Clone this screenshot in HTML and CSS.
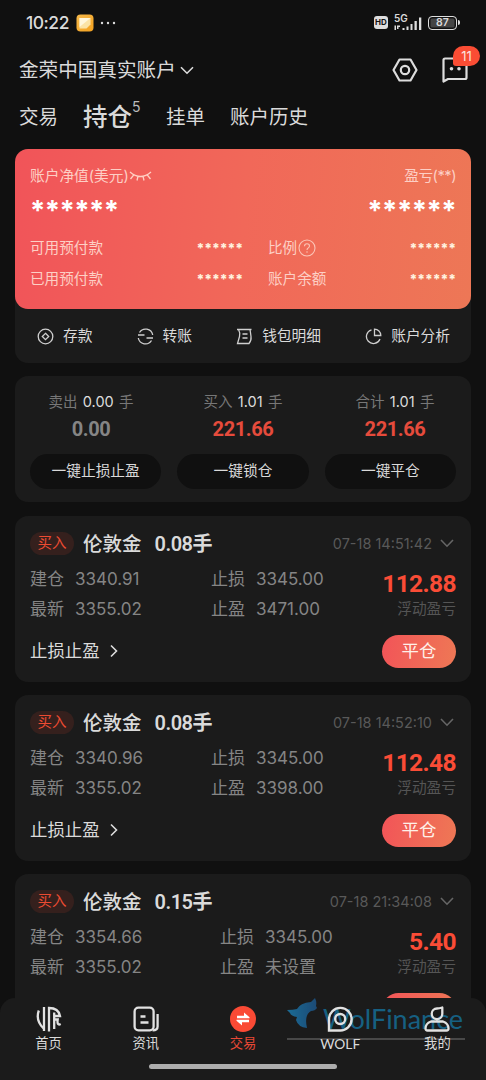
FILE: index.html
```html
<!DOCTYPE html>
<html lang="zh-CN">
<head>
<meta charset="utf-8">
<title>持仓</title>
<link rel="stylesheet" href="styles.css">
</head>
<body>
<div class="app">
  <header class="status">
    <span class="clock">10:22</span>
    <svg class="note" width="18" height="18" viewBox="0 0 18 18"><defs><linearGradient id="ng" x1="0" y1="0" x2="1" y2="1"><stop offset="0" stop-color="#f5b84a"/><stop offset="1" stop-color="#f3a11f"/></linearGradient></defs><rect x=".5" y=".5" width="17" height="17" rx="4" fill="url(#ng)"/><path d="M3.500 4h11v6.500l-4 4h-7z" fill="#fbe3a6"/><path d="M3.500 4h11L3.500 13z" fill="#fff6dc"/></svg>
    <svg width="16" height="4" viewBox="0 0 16 4" fill="#ddd"><circle cx="2" cy="2" r="1.200"/><circle cx="8" cy="2" r="1.200"/><circle cx="14" cy="2" r="1.200"/></svg>
    <span class="spacer"></span>
    <span class="hd">HD</span>
    <span class="signal"><span class="net">5G</span>
      <svg width="28" height="14" viewBox="0 0 28 14" fill="#ddd"><path d="M.5 9.500H2V14H.5zM3 9.500h3V11H4.500v2H3zM8.500 12h2v2h-2zM12.500 10.500h2V14h-2zM16.500 8h2v6h-2zM20.500 5h2.300v9h-2.300zM25 1.500h2.300V14H25z"/></svg>
    </span>
    <span class="battery">87</span><span class="cap"></span>
  </header>

  <div class="account">
    <span class="account-name">金荣中国真实账户</span>
    <svg width="14" height="9" viewBox="0 0 14 9" fill="none" stroke="#ddd" stroke-width="1.600"><path d="M1 1.200l6 6 6-6"/></svg>
    <span class="spacer"></span>
    <svg class="gear" width="26" height="24" viewBox="0 0 26 24" fill="none" stroke="#ddd" stroke-width="2.200" stroke-linejoin="round"><path d="M7.500 1.500h11L24.500 12l-6 10.500h-11L1.500 12z"/><circle cx="13" cy="12" r="4.200"/></svg>
    <span class="msg">
      <svg width="26" height="26" viewBox="0 0 26 26" fill="none" stroke="#ddd" stroke-width="2.200" stroke-linejoin="round"><path d="M1.500 24.500V3q0-1.500 1.500-1.500h20q1.500 0 1.500 1.500v17.500q0 1.500-1.500 1.500H6z"/><g fill="#ddd" stroke="none"><circle cx="9.500" cy="11.800" r="1.800"/><circle cx="17" cy="11.800" r="1.800"/></g></svg>
      <span class="badge">11</span>
    </span>
  </div>

  <nav class="tabs">
    <span>交易</span>
    <span class="tab-on">持仓<sup>5</sup></span>
    <span>挂单</span>
    <span>账户历史</span>
  </nav>

  <main class="content">
    <section class="wallet">
      <div class="balance">
        <div class="b-head">
          <span class="row">账户净值(美元)<svg width="23" height="11" viewBox="0 0 23 11" fill="none" stroke="#ffd0c4" stroke-width="1.300"><path d="M1 1q10.500 9 21 0M5 3.600L1.500 8M9 5.200L8 9.500M14 5.200l1 4.300M18 3.600L21.500 8"/></svg></span>
          <span>盈亏(**)</span>
        </div>
        <div class="b-stars"><span>******</span><span>******</span></div>
        <div class="b-grid">
          <span>可用预付款</span><span class="mask">******</span>
          <span class="row second">比例<svg width="18" height="18" viewBox="0 0 18 18" fill="none" stroke="#fbc4b6" stroke-width="1.100"><circle cx="9" cy="9" r="8"/><path d="M6.500 7.200q0-2.500 2.500-2.500t2.500 2.200q0 1.200-1.300 2Q9 9.600 9 11M9 12.300v1.400"/></svg></span><span class="mask">******</span>
          <span>已用预付款</span><span class="mask">******</span>
          <span class="second">账户余额</span><span class="mask">******</span>
        </div>
      </div>
      <div class="actions">
        <span class="action"><svg width="17" height="17" viewBox="0 0 17 17"><circle cx="8.500" cy="8.500" r="7.300"/><path d="M8.500 5.300l3.200 3.200-3.200 3.200-3.200-3.200z"/></svg>存款</span>
        <span class="action"><svg width="17" height="17" viewBox="0 0 17 17"><path d="M2.500 4.500A7.200 7.200 0 0 1 15.700 7M1 7h6.500M14.500 12.500A7.200 7.200 0 0 1 1.300 10M16 10H9.500"/></svg>转账</span>
        <span class="action"><svg width="17" height="17" viewBox="0 0 17 17"><path d="M1 1.500h14.500M2.500 1.500q2 3.500 1 7T1.500 15.500h11.500q2.500-3 2-7t-1-7M6.500 6h5M6.500 10h5"/></svg>钱包明细</span>
        <span class="action"><svg width="17" height="17" viewBox="0 0 17 17"><path d="M6.500 1.800A7 7 0 1 0 15 11M9.500 1.200v6.300h6.300A6.300 6.300 0 0 0 9.500 1.200z"/></svg>账户分析</span>
      </div>
    </section>

    <section class="summary">
      <div class="sums">
        <div>卖出 <b>0.00</b> 手<strong class="zero">0.00</strong></div>
        <div>买入 <b>1.01</b> 手<strong>221.66</strong></div>
        <div>合计 <b>1.01</b> 手<strong>221.66</strong></div>
      </div>
      <div class="pills"><span>一键止损止盈</span><span>一键锁仓</span><span>一键平仓</span></div>
    </section>

    <article class="position">
      <div class="p-head"><span class="tag">买入</span><span class="name">伦敦金</span><span class="lots">0.08手</span><span class="spacer"></span><time>07-18 14:51:42</time><svg width="14" height="9" viewBox="0 0 14 9"><path d="M1 1l6 6.200L13 1"/></svg></div>
      <div class="p-body">
        <div class="quotes"><span>建仓<i>3340.91</i></span><span>最新<i>3355.02</i></span></div>
        <div class="quotes"><span>止损<i>3345.00</i></span><span>止盈<i>3471.00</i></span></div>
        <div class="profit"><strong>112.88</strong><span>浮动盈亏</span></div>
      </div>
      <div class="p-foot"><span class="row">止损止盈<svg width="8" height="14" viewBox="0 0 8 14"><path d="M1 1.500L6.500 7 1 12.500"/></svg></span><span class="close">平仓</span></div>
    </article>

    <article class="position">
      <div class="p-head"><span class="tag">买入</span><span class="name">伦敦金</span><span class="lots">0.08手</span><span class="spacer"></span><time>07-18 14:52:10</time><svg width="14" height="9" viewBox="0 0 14 9"><path d="M1 1l6 6.200L13 1"/></svg></div>
      <div class="p-body">
        <div class="quotes"><span>建仓<i>3340.96</i></span><span>最新<i>3355.02</i></span></div>
        <div class="quotes"><span>止损<i>3345.00</i></span><span>止盈<i>3398.00</i></span></div>
        <div class="profit"><strong>112.48</strong><span>浮动盈亏</span></div>
      </div>
      <div class="p-foot"><span class="row">止损止盈<svg width="8" height="14" viewBox="0 0 8 14"><path d="M1 1.500L6.500 7 1 12.500"/></svg></span><span class="close">平仓</span></div>
    </article>

    <article class="position">
      <div class="p-head"><span class="tag">买入</span><span class="name">伦敦金</span><span class="lots">0.15手</span><span class="spacer"></span><time>07-18 21:34:08</time><svg width="14" height="9" viewBox="0 0 14 9"><path d="M1 1l6 6.200L13 1"/></svg></div>
      <div class="p-body wide">
        <div class="quotes"><span>建仓<i>3354.66</i></span><span>最新<i>3355.02</i></span></div>
        <div class="quotes"><span>止损<i>3345.00</i></span><span>止盈<i>未设置</i></span></div>
        <div class="profit"><strong>5.40</strong><span>浮动盈亏</span></div>
      </div>
      <div class="p-foot"><span class="row"></span><span class="close"></span></div>
    </article>
  </main>

  <footer class="bottom">
    <div class="watermark">
      <div class="mark-logo"><svg width="31" height="32" viewBox="0 0 31 32"><defs><linearGradient id="wg" x1="0" x2="1"><stop offset="0" stop-color="#1b86bd"/><stop offset="1" stop-color="#1d5a94"/></linearGradient></defs><path d="M0 12q6 0 10-1 3-6 14-7l4-4q2 4 1 8l1 2q-2 3-6 3-7 4-4 17-9-1-11-8l1-3q-6-1-7-4z" fill="url(#wg)"/></svg><span>WolFinance</span></div>
    </div>
    <div class="nav">
      <span class="nav-item"><svg width="26" height="26" viewBox="0 0 26 26" fill="none" stroke="#e2e2e2" stroke-width="2.300"><path d="M2.800 4.500q-3.500 10 4.800 18M8 1v24M13 25.500V2q9.500 0 11 8h-5.500M18.200 6.500V23M18.200 13.500h3.500q-1 6.500 3 4.500"/></svg>首页</span>
      <span class="nav-item"><svg width="26" height="26" viewBox="0 0 26 26" fill="none" stroke="#e2e2e2" stroke-width="2.300"><rect x="1.600" y="1.600" width="19" height="22.800" rx="3.800"/><path d="M24.600 8v12.500q0 3.900-5 3.900M7.500 10.500h5M7.500 16.500h8"/></svg>资讯</span>
      <span class="nav-item on"><svg width="26" height="26" viewBox="0 0 26 26"><circle cx="13" cy="13" r="13" fill="#fa4a35"/><path d="M7 9.800h7V6.500l5.500 4.700v1H7zM19 16.200h-7v3.300l-5.500-4.700v-1H19z" fill="#fff"/></svg>交易</span>
      <span class="nav-item"><svg width="26" height="26" viewBox="0 0 26 26" fill="none" stroke="#e2e2e2" stroke-width="2.400"><path d="M2 24.500V13A11.300 11.300 0 1 1 13 24.500z"/><circle cx="13.200" cy="13" r="5"/></svg><span class="latin">WOLF</span></span>
      <span class="nav-item"><svg width="26" height="26" viewBox="0 0 26 26" fill="none" stroke="#e2e2e2" stroke-width="2.300" stroke-linejoin="round"><path d="M18.300 1.500V8a5.300 5.300 0 1 1-5.300-5.500q2 0 5.300-1zM7 15.500h12q5.500 2 5.500 7 0 2-2 2h-19q-2 0-2-2 0-5 5.500-7z"/></svg>我的</span>
    </div>
    <div class="home-bar"></div>
  </footer>
</div>
</body>
</html>
```
FILE: styles.css
```css
* { box-sizing: border-box; }
body { margin: 0; background: #101010; }
.app {
  position: relative;
  display: flex;
  flex-direction: column;
  width: 486px;
  height: 1080px;
  overflow: hidden;
  background: #101010;
  color: #dadada;
  font: 15px/20px Inter, "Noto Sans CJK SC", sans-serif;
  white-space: nowrap;
}
svg { display: block; flex: none; }
.spacer { flex: 1; }
.row { display: flex; align-items: center; }

/* Status bar */
.status { display: flex; align-items: center; height: 45px; padding: 0 26px; }
.clock { width: 50px; font-size: 17.5px; font-weight: 500; letter-spacing: -.5px; }
.note { margin-right: 6px; }
.hd { width: 14px; height: 13px; border-radius: 3px; background: #ddd; color: #111; font: 700 8px/13px Inter, sans-serif; text-align: center; }
.signal { position: relative; display: flex; flex-direction: column; align-items: flex-end; width: 34px; height: 16px; padding-top: 1px; }
.net { position: absolute; left: 6px; top: -1px; font: 600 10px/9px Inter, sans-serif; }
.battery { width: 29px; height: 14px; margin-left: 6px; border: 1.5px solid #ddd; border-radius: 4px; background: #444; box-shadow: inset 0 0 0 1.5px #111; font: 600 10.5px/12px Inter, sans-serif; text-align: center; }
.cap { width: 2px; height: 5px; margin-left: 1px; background: #ddd; border-radius: 0 2px 2px 0; }

/* Account header */
.account { display: flex; align-items: center; height: 50px; padding: 0 18px 0 19px; }
.account-name { margin-right: 4px; font-size: 19.6px; }
.gear { margin-right: 24px; }
.msg { position: relative; }
.badge { position: absolute; left: 11px; top: -11px; width: 27px; height: 20px; border-radius: 10px 10px 10px 3px; background: #fa4d34; color: #fbe3dd; font-size: 13px; text-align: center; }
.tabs { display: flex; align-items: center; height: 44px; padding: 0 19px; font-size: 19.5px; }
.tabs > span { margin-right: 25px; }
.tabs .tab-on { position: relative; margin-right: 34px; font-size: 24.5px; font-weight: 500; }
.tab-on sup { position: absolute; left: 49px; top: -7px; font: 400 14px/14px Inter, sans-serif; color: #bbb; }

.content { display: flex; flex-direction: column; gap: 13px; padding: 10px 15px 0; }

/* Wallet */
.wallet { flex: none; height: 214px; border-radius: 13px; background: #1b1b1b; }
.balance { height: 160px; padding: 17px 15px 0; border-radius: 13px; background: linear-gradient(95deg, #f15459 0%, #f16859 50%, #ed7756 100%); color: #fdcfc5; font-size: 14.6px; }
.b-head, .b-stars { display: flex; justify-content: space-between; }
.b-head { height: 20px; font-size: 14.7px; line-height: 21px; }
.b-head span:last-child { letter-spacing: -.5px; }
.b-stars { height: 42px; padding-top: 14px; color: #fff; font: 700 27.5px/20px Inter, sans-serif; letter-spacing: -.6px; }
.b-grid { display: grid; grid-template-columns: 112px 101px 112px 101px; grid-auto-rows: 31px; align-items: center; margin-top: 4px; }
.second { padding-left: 25px; }
.mask { padding-top: 1px; color: #fff2df; font: 800 13.5px/20px Inter, sans-serif; letter-spacing: -.1px; text-align: right; }
.b-grid .row svg { margin-left: 1px; }
.actions { display: flex; align-items: center; justify-content: space-between; height: 54px; padding: 0 21px 0 22px; font-size: 14.7px; }
.action { display: flex; align-items: center; gap: 9px; }
.action svg { fill: none; stroke: #cfcfcf; stroke-width: 1.300; }

/* Totals */
.summary { flex: none; height: 126px; padding-top: 15px; border-radius: 13px; background: #1b1b1b; }
.sums { display: grid; grid-template-columns: repeat(3, 1fr); text-align: center; color: #777; font-size: 14.5px; line-height: 21px; word-spacing: 1.2px; }
.sums b { color: #ddd; font-weight: 400; }
.sums strong { display: block; margin-top: 4px; color: #e64b3c; font: 700 20px/26px Roboto, sans-serif; letter-spacing: -.4px; }
.sums .zero { color: #858585; }
.pills { display: flex; gap: 16px; padding: 12px 15px 0; }
.pills span { flex: 1; height: 35px; border-radius: 18px; background: #101010; font-size: 14.7px; line-height: 34px; text-align: center; }

/* Positions */
.position { flex: none; height: 166px; padding: 15px 15px 0; border-radius: 13px; background: #1b1b1b; }
.summary + .position { margin-top: .5px; }
.position svg { fill: none; stroke: #777; stroke-width: 1.600; }
.p-head { display: flex; align-items: center; height: 26px; }
.tag { width: 44px; height: 23px; border-radius: 12px; background: #35201d; color: #ec4b32; font-size: 14.5px; line-height: 22px; text-align: center; }
.name { margin: 0 13px 0 9px; font-size: 19.5px; font-weight: 500; }
.lots { font: 600 20px/24px Roboto, "Noto Sans CJK SC", sans-serif; letter-spacing: -.5px; }
time { margin-right: 8px; color: #595959; font-size: 14.5px; }
.position .p-head svg { margin-right: 2px; stroke: #666; }
.p-body { display: grid; grid-template-columns: 181px 130px 1fr; height: 64px; padding-top: 7px; color: #858585; }
.p-body.wide { grid-template-columns: 190px 130px 1fr; }
.quotes { display: flex; flex-direction: column; font-size: 17px; line-height: 30px; }
.quotes i { margin-left: 11px; font-style: normal; font-size: 17px; }
.profit { padding-top: 6px; text-align: right; }
.profit strong { display: block; color: #fa4c36; font: 700 24.5px/28px Roboto, sans-serif; letter-spacing: -.6px; }
.profit span { display: block; margin-top: 1px; color: #555; font-size: 14.7px; }
.p-foot { display: flex; align-items: center; justify-content: space-between; height: 61px; font-size: 17.4px; }
.p-foot .row svg { margin-left: 10px; stroke: #ddd; }
.close { width: 74px; height: 33px; border-radius: 17px; background: linear-gradient(100deg, #f25458, #ee7855); color: #fff0e8; line-height: 32px; text-align: center; }

/* Bottom navigation floats over the scrolling list */
.bottom { position: absolute; left: 0; right: 0; bottom: 0; height: 82px; border-radius: 15px 15px 0 0; background: #1b1b1b; }
.nav { position: relative; display: grid; grid-template-columns: repeat(5, 1fr); padding-top: 8px; }
.nav-item { display: flex; flex-direction: column; align-items: center; gap: 1px; font-size: 13.3px; }
.nav-item.on { color: #e74835; }
.latin { font-family: Lato, sans-serif; font-size: 13.8px; line-height: 22px; }
.home-bar { width: 188px; height: 5px; margin: 9px auto 0; border-radius: 3px; background: #adadad; }
.watermark { position: absolute; left: 287px; top: 0; width: 178px; height: 42px; border-bottom: 2px solid #484848; }
.mark-logo { display: flex; gap: 5px; color: #1577a5; opacity: .75; font: 27px/42px Lato, sans-serif; }
```
